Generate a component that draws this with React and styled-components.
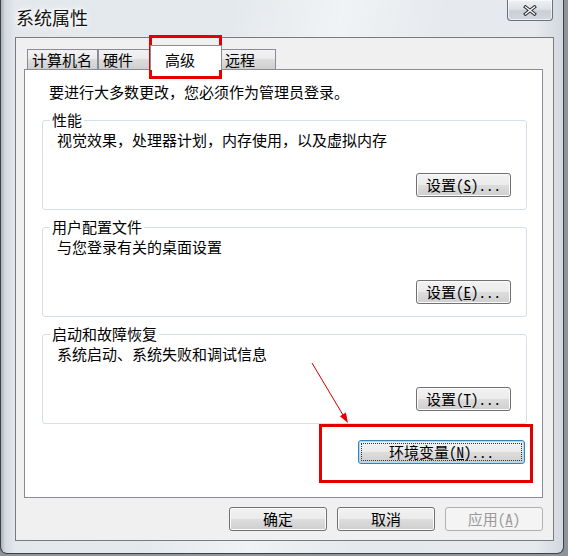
import React from 'react'
import styled, { createGlobalStyle } from 'styled-components'

const GlobalStyle = createGlobalStyle`
  html, body {
    margin: 0;
    padding: 0;
  }
  body {
    width: 568px;
    height: 556px;
    overflow: hidden;
    background: #8d959c;
    font-family: "Noto Sans CJK SC", "Noto Sans", sans-serif;
    font-size: 15px;
    color: #000;
  }
`

const Window = styled.div`
  position: relative;
  box-sizing: border-box;
  width: 564px;
  height: 554px;
  padding: 0 9px 12px 14px;
  border: 1px solid #3d4247;
  border-top: none;
  border-radius: 0 0 7px 7px;
  display: flex;
  flex-direction: column;
  background:
    linear-gradient(100deg, rgba(255, 255, 255, 0) 35%, rgba(255, 255, 255, 0.45) 52%, rgba(255, 255, 255, 0) 68%),
    linear-gradient(90deg, #a9b0b6 0, #d3d9de 4px, #e3e8ec 14px, #e6eaee 95%, #d2d8de 100%);
`

const TitleBar = styled.div`
  height: 37px;
  flex-shrink: 0;
  display: flex;
  justify-content: space-between;
  align-items: flex-start;
`

const Title = styled.div`
  margin: 5px 0 0 1px;
  font-size: 18px;
  line-height: 24px;
  color: #111;
  text-shadow: 0 0 6px #fff, 0 0 10px #fff, 0 0 3px #fff;
`

const CloseButton = styled.div`
  box-sizing: border-box;
  width: 46px;
  height: 21px;
  margin-right: 1px;
  border: 1px solid #6b7179;
  border-top: none;
  border-radius: 0 0 4px 4px;
  background: linear-gradient(#eef1f4 0%, #dde2e7 45%, #c9cfd6 55%, #d3d8de 100%);
  box-shadow: inset 0 0 0 1px rgba(255, 255, 255, 0.6);
  display: flex;
  align-items: center;
  justify-content: center;
`

const Client = styled.div`
  box-sizing: border-box;
  width: 539px;
  height: 504px;
  padding: 7px 10px 9px 8px;
  border: 1px solid #7b7b7b;
  background: #f0f0f0;
  display: flex;
  flex-direction: column;
`

const TabStrip = styled.div`
  height: 24px;
  padding-left: 3px;
  display: flex;
  align-items: flex-end;
`

const Tab = styled.div`
  box-sizing: border-box;
  width: ${(p) => (p.$active ? p.$w + 4 : p.$w)}px;
  height: ${(p) => (p.$active ? 25 : 20)}px;
  margin: ${(p) => (p.$active ? '0 -2px -1px' : '0')};
  padding: ${(p) => (p.$active ? '4px 0 0 14px' : '0 0 0 4px')};
  border: 1px solid #898c95;
  border-bottom: none;
  line-height: 19px;
  white-space: nowrap;
  background: ${(p) =>
    p.$active ? '#fff' : 'linear-gradient(#f3f3f3 0%, #ebebeb 50%, #dddddd 50%, #cfcfcf 100%)'};
  position: ${(p) => (p.$active ? 'relative' : 'static')};
  z-index: ${(p) => (p.$active ? 1 : 'auto')};
`

const Panel = styled.div`
  box-sizing: border-box;
  height: 429px;
  padding: 12px 15px 0 17px;
  border: 1px solid #898c95;
  background: #fff;
  display: flex;
  flex-direction: column;
`

const Intro = styled.div`
  padding-left: 7px;
  line-height: 20px;
  margin-bottom: 8px;
`

const Group = styled.fieldset`
  margin: 0;
  padding: 0;
  min-width: 0;
  border: 1px solid #d5dfe5;
  border-radius: 3px;

  & + & {
    margin-top: 7px;
  }
`

const Legend = styled.legend`
  margin-left: 7px;
  padding: 0 2px;
  line-height: 20px;
`

const GroupBody = styled.div`
  padding: 0 15px 12px 14px;
`

const Desc = styled.div`
  line-height: 20px;
`

const ButtonRow = styled.div`
  display: flex;
  justify-content: flex-end;
  margin-top: ${(p) => p.$top || 0}px;
  padding-right: ${(p) => p.$right || 0}px;
`

const Button = styled.button`
  box-sizing: border-box;
  width: ${(p) => p.$w}px;
  height: 24px;
  padding: 0;
  border: 1px solid #707070;
  border-radius: 3px;
  background: linear-gradient(#f2f2f2 0%, #ebebeb 50%, #dddddd 50%, #cfcfcf 100%);
  box-shadow: inset 0 0 0 1px #fbfbfb;
  font-family: "Noto Sans Mono CJK SC", "Noto Sans CJK SC", sans-serif;
  font-size: 15px;
  line-height: 20px;
  color: #000;
  display: flex;
  align-items: center;
  justify-content: center;

  &:disabled {
    border-color: #adb2b5;
    background: #f4f4f4;
    box-shadow: none;
    color: #9a9a9a;
  }
`

const DefaultButton = styled(Button)`
  border-color: #3c7fb1;
  box-shadow: inset 0 0 0 1px #a6def7;
  outline: 1px dotted #333;
  outline-offset: -4px;
`

const Footer = styled.div`
  margin-top: 9px;
  display: flex;
  justify-content: flex-end;
  gap: 10px;
`

const RedBox = styled.div`
  position: absolute;
  box-sizing: border-box;
  border: 3px solid #e30000;
  pointer-events: none;
`

const Arrow = styled.svg`
  position: absolute;
  left: 304px;
  top: 360px;
  pointer-events: none;
`

const tabs = [
  { label: '计算机名', w: 71 },
  { label: '硬件', w: 54 },
  { label: '高级', w: 68, active: true },
  { label: '远程', w: 56 },
]

const groups = [
  { title: '性能', desc: '视觉效果，处理器计划，内存使用，以及虚拟内存', key: 'S' },
  { title: '用户配置文件', desc: '与您登录有关的桌面设置', key: 'E' },
  { title: '启动和故障恢复', desc: '系统启动、系统失败和调试信息', key: 'T' },
]

export default function App() {
  return (
    <>
      <GlobalStyle />
      <Window>
        <TitleBar>
          <Title>系统属性</Title>
          <CloseButton>
            <svg width="14" height="11" viewBox="0 0 14 11">
              <path d="M2.5 2 L11.5 9 M11.5 2 L2.5 9" stroke="#2a2f36" strokeWidth="3.4" strokeLinecap="square" />
              <path d="M2.5 2 L11.5 9 M11.5 2 L2.5 9" stroke="#fff" strokeWidth="1.4" strokeLinecap="square" />
            </svg>
          </CloseButton>
        </TitleBar>

        <Client>
          <TabStrip>
            {tabs.map((t) => (
              <Tab key={t.label} $w={t.w} $active={t.active}>
                {t.label}
              </Tab>
            ))}
          </TabStrip>

          <Panel>
            <Intro>要进行大多数更改，您必须作为管理员登录。</Intro>
            {groups.map((g) => (
              <Group key={g.title}>
                <Legend>{g.title}</Legend>
                <GroupBody>
                  <Desc>{g.desc}</Desc>
                  <ButtonRow $top={23}>
                    <Button $w={95}>
                      设置(<u>{g.key}</u>)...
                    </Button>
                  </ButtonRow>
                </GroupBody>
              </Group>
            ))}
            <ButtonRow $top={16} $right={2}>
              <DefaultButton $w={167}>
                环境变量(<u>N</u>)...
              </DefaultButton>
            </ButtonRow>
          </Panel>

          <Footer>
            <Button $w={98}>确定</Button>
            <Button $w={98}>取消</Button>
            <Button $w={98} disabled>
              应用(<u>A</u>)
            </Button>
          </Footer>
        </Client>

        <RedBox style={{ left: 148, top: 35, width: 73, height: 44 }} />
        <RedBox style={{ left: 318, top: 424, width: 214, height: 59 }} />
        <Arrow width="50" height="68" viewBox="0 0 50 68">
          <line x1="7" y1="3" x2="38" y2="55" stroke="#d40000" strokeWidth="1" />
          <polygon points="43,63 34.9,56.2 40.9,52.6" fill="#e30000" />
        </Arrow>
      </Window>
    </>
  )
}
